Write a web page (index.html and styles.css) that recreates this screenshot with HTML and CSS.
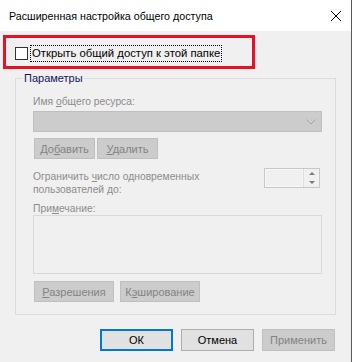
FILE: index.html
```html
<!DOCTYPE html>
<html lang="ru">
<head>
    <meta charset="UTF-8">
    <title>Расширенная настройка общего доступа</title>
    <link rel="stylesheet" href="styles.css">
</head>
<body>
<div class="window">
    <div class="titlebar">
        <span class="title">Расширенная настройка общего доступа</span>
        <svg class="close" width="12" height="12" viewBox="0 0 12 12">
            <path d="M1 1 L11 11 M11 1 L1 11" stroke="#000" stroke-width="1" fill="none"/>
        </svg>
    </div>

    <div class="content">
        <div class="highlight">
            <label class="share-check">
                <span class="checkbox"></span>
                <span class="focus">Открыть общий доступ к этой папке</span>
            </label>
        </div>

        <fieldset class="group">
            <legend>Параметры</legend>

            <div class="muted share-label">Имя <u>о</u>бщего ресурса:</div>
            <div class="combo">
                <svg width="10" height="6" viewBox="0 0 10 6">
                    <path d="M0.5 0.5 L5 5 L9.5 0.5" stroke="#a6a6a6" fill="none"/>
                </svg>
            </div>
            <div class="btn-row">
                <button class="btn" disabled>До<u>б</u>авить</button>
                <button class="btn" disabled><u>У</u>далить</button>
            </div>

            <div class="limit-row">
                <div class="muted">Ограничить <u>ч</u>исло одновременных<br>пользователей до:</div>
                <div class="spinner">
                    <div class="spin-field"></div>
                    <div class="spin-buttons">
                        <span class="arrow-up"></span>
                        <span class="arrow-down"></span>
                    </div>
                </div>
            </div>

            <div class="muted note-label">При<u>м</u>ечание:</div>
            <div class="note"></div>
            <div class="btn-row btn-row-wide">
                <button class="btn btn-wide" disabled><u>Р</u>азрешения</button>
                <button class="btn btn-wide" disabled>К<u>э</u>ширование</button>
            </div>
        </fieldset>

        <div class="footer">
            <button class="dlg-btn default">ОК</button>
            <button class="dlg-btn">Отмена</button>
            <button class="dlg-btn" disabled>Применить</button>
        </div>
    </div>
</div>
</body>
</html>
```

FILE: styles.css
```css
body {
    margin: 0;
    font-family: 'Liberation Sans', Arial, sans-serif;
    font-size: 11px;
    color: #000;
    background-color: #f0f0f0;
}

.window {
    width: 351px;
    height: 362px;
    border-right: 1px solid #5a5a5a;
    background-color: #f0f0f0;
}

.titlebar {
    height: 31px;
    background-color: #fff;
    display: flex;
    align-items: center;
    justify-content: space-between;
    padding-left: 9px;
    padding-right: 9px;
}

.title {
    font-size: 10.7px;
    margin-top: 1px;
}

.content {
    padding-top: 4px;
}

.highlight {
    margin-left: 3px;
    width: 237px;
    height: 28px;
    border: 3px solid #e81123;
    display: flex;
    align-items: center;
    padding-left: 9px;
}

.share-check {
    display: flex;
    align-items: center;
    margin-top: 2px;
    font-size: 11.3px;
}

.checkbox {
    width: 11px;
    height: 11px;
    border: 1px solid #333;
    background-color: #fff;
    margin-right: 3px;
}

.focus {
    outline: 1px dotted #000;
    padding: 0 1px;
    line-height: 15px;
}

.group {
    margin: 2px 0 0 15px;
    width: 289px;
    padding: 0 13px 12px 17px;
    border: 1px solid #dcdcdc;
}

.group legend {
    color: #14145a;
    font-size: 11px;
    padding: 0 1px;
    margin-left: -10px;
    line-height: 14px;
}

.muted {
    color: #8c8c8c;
    font-size: 10.3px;
    line-height: 13px;
}

.share-label {
    margin-top: 10px;
}

.combo {
    height: 19px;
    margin-top: 3px;
    background-color: #cccccc;
    border: 1px solid #bfbfbf;
    display: flex;
    align-items: center;
    justify-content: flex-end;
    padding-right: 5px;
}

.btn-row {
    display: flex;
    gap: 2px;
    margin-top: 6px;
    padding-left: 1px;
}

.btn-row-wide {
    gap: 6px;
    margin-top: 7px;
}

.btn {
    font-family: inherit;
    font-size: 11px;
    color: #838383;
    background-color: #cccccc;
    border: 1px solid #bfbfbf;
    height: 21px;
    width: 61px;
    padding: 0;
}

.btn-wide {
    width: 80px;
}

.limit-row {
    display: flex;
    justify-content: space-between;
    align-items: flex-start;
    margin-top: 11px;
}

.spinner {
    width: 54px;
    height: 18px;
    border: 1px solid #c8c8c8;
    display: flex;
    margin-top: -2px;
    margin-right: 2px;
}

.spin-field {
    flex: 1;
    border: 1px solid #f8f8f8;
}

.spin-buttons {
    width: 15px;
    display: flex;
    flex-direction: column;
    align-items: center;
    justify-content: space-around;
    border-left: 1px solid #dcdcdc;
}

.arrow-up {
    width: 0;
    height: 0;
    border-left: 3px solid transparent;
    border-right: 3px solid transparent;
    border-bottom: 3px solid #7a7a7a;
}

.arrow-down {
    width: 0;
    height: 0;
    border-left: 3px solid transparent;
    border-right: 3px solid transparent;
    border-top: 3px solid #7a7a7a;
}

.note-label {
    margin-top: 7px;
    line-height: 12px;
}

.note {
    height: 57px;
    border: 1px solid #d9d9d9;
}

.footer {
    display: flex;
    gap: 8px;
    justify-content: flex-end;
    padding-right: 16px;
    margin-top: 14px;
}

.dlg-btn {
    font-family: inherit;
    font-size: 11px;
    width: 73px;
    height: 22px;
    padding: 0;
    background-color: #e1e1e1;
    border: 1px solid #adadad;
    color: #000;
}

.dlg-btn.default {
    border: 2px solid #0078d7;
}

.dlg-btn:disabled {
    background-color: #cccccc;
    border-color: #bfbfbf;
    color: #838383;
}
```
